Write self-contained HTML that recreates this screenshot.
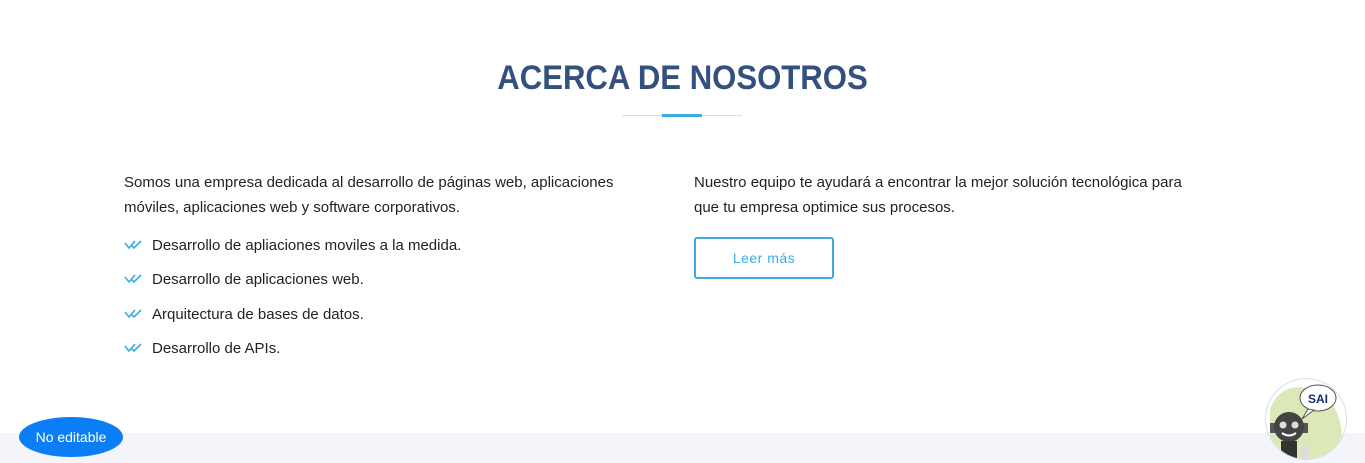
<!DOCTYPE html>
<html><head><meta charset="utf-8"><style>
body{margin:0;width:1365px;height:463px;background:#fff;position:relative;overflow:hidden;font-family:"Liberation Sans",sans-serif;color:#222;}
h2{position:absolute;left:0;width:1365px;top:58px;margin:0;text-align:center;font-size:34px;font-weight:bold;color:#34507e;line-height:40px;transform:scaleX(0.915)}
.line{position:absolute;left:622px;top:115px;width:120px;height:1px;background:#ddd}
.line2{position:absolute;left:662px;top:114px;width:40px;height:3px;background:#3cabe3}
p{margin:0;font-size:15px;line-height:25px}
.l{position:absolute;left:124px;top:170px;width:540px}
.r{position:absolute;left:694px;top:170px;width:510px}
ul{list-style:none;margin:0;padding:0;position:absolute;left:124px;top:233px}
li{height:34.3px;font-size:15px;line-height:25px;padding-left:28px;position:relative}
li svg{position:absolute;left:0;top:7px}
.btn{position:absolute;left:694px;top:237px;width:136px;height:38px;border:2px solid #3cabe3;border-radius:3px;color:#3cabe3;font-size:14px;text-align:center;line-height:38px;letter-spacing:0.5px}
.foot{position:absolute;left:0;top:433px;width:1365px;height:30px;background:#f3f5fa}
.ne{position:absolute;left:19px;top:417px;width:104px;height:40px;border-radius:50%;background:#0c7ef5;color:#fff;font-size:14px;text-align:center;line-height:40px}
.bot{position:absolute;left:1265px;top:378px;width:80px;height:80px;border-radius:50%;background:#fff;border:1px solid #cfe0ee;overflow:hidden}
</style></head><body>
<h2>ACERCA DE NOSOTROS</h2>
<div class="line"></div><div class="line2"></div>
<p class="l">Somos una empresa dedicada al desarrollo de páginas web, aplicaciones móviles, aplicaciones web y software corporativos.</p>
<ul>
<li><svg width="20" height="10" viewBox="0 0 20 10"><path d="M1 3l4 5 6-7M7 5l3 3 7-7" stroke="#3cabe3" stroke-width="1.6" fill="none"/></svg>Desarrollo de apliaciones moviles a la medida.</li>
<li><svg width="20" height="10" viewBox="0 0 20 10"><path d="M1 3l4 5 6-7M7 5l3 3 7-7" stroke="#3cabe3" stroke-width="1.6" fill="none"/></svg>Desarrollo de aplicaciones web.</li>
<li><svg width="20" height="10" viewBox="0 0 20 10"><path d="M1 3l4 5 6-7M7 5l3 3 7-7" stroke="#3cabe3" stroke-width="1.6" fill="none"/></svg>Arquitectura de bases de datos.</li>
<li><svg width="20" height="10" viewBox="0 0 20 10"><path d="M1 3l4 5 6-7M7 5l3 3 7-7" stroke="#3cabe3" stroke-width="1.6" fill="none"/></svg>Desarrollo de APIs.</li>
</ul>
<p class="r">Nuestro equipo te ayudará a encontrar la mejor solución tecnológica para<br>que tu empresa optimice sus procesos.</p>
<div class="btn">Leer más</div>
<div class="foot"></div>
<div class="ne">No editable</div>
<div class="bot"><svg width="80" height="80" viewBox="0 0 80 80">
<path d="M4 30 Q15 2 45 10 Q75 20 76 60 L76 80 L4 80Z" fill="#dde8b8"/>
<ellipse cx="52" cy="19" rx="18" ry="13" fill="#fff" stroke="#555"/>
<path d="M42 30 L36 40 L48 31Z" fill="#fff" stroke="#555"/>
<text x="52" y="24" font-family="Liberation Sans" font-weight="bold" font-size="12" fill="#1d2a6a" text-anchor="middle">SAI</text>
<rect x="4" y="44" width="5" height="10" fill="#555"/><rect x="37" y="44" width="5" height="10" fill="#555"/>
<ellipse cx="23" cy="48" rx="15" ry="15" fill="#444"/>
<circle cx="17" cy="46" r="3.5" fill="#ddd"/><circle cx="29" cy="46" r="3.5" fill="#ddd"/>
<path d="M16 54 Q23 59 30 54" stroke="#fff" stroke-width="2" fill="none"/>
<rect x="15" y="62" width="16" height="18" fill="#333"/>
<rect x="3" y="66" width="8" height="14" fill="#ddd"/><rect x="35" y="66" width="8" height="14" fill="#ddd"/>
</svg></div>
</body></html>
